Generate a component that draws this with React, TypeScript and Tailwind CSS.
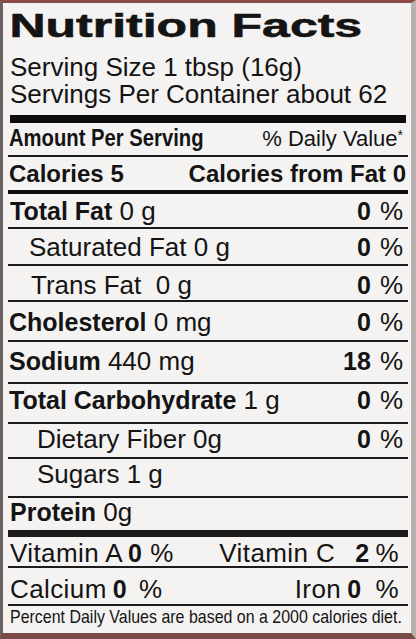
import React from "react";

type Row = {
  name: string;
  amount?: string;
  dv?: string;
  bold: boolean;
  box: string;
  line: string;
};

const rows: Row[] = [
  { name: "Total Fat", amount: "0 g", dv: "0", bold: true, box: "h-[33px] pb-[3px] pl-[2px]", line: "h-[2px]" },
  { name: "Saturated Fat", amount: "0 g", dv: "0", bold: false, box: "h-[35px] pb-[4px] pl-[21px]", line: "h-[2px]" },
  { name: "Trans Fat", amount: "\u00a00 g", dv: "0", bold: false, box: "h-[34px] pb-[2px] pl-[23px]", line: "h-[2px]" },
  { name: "Cholesterol", amount: "0 mg", dv: "0", bold: true, box: "h-[38px] pb-[5px] pl-[1px]", line: "h-[2px]" },
  { name: "Sodium", amount: "440 mg", dv: "18", bold: true, box: "h-[40px] pb-[8px] pl-[1px]", line: "h-[2px]" },
  { name: "Total Carbohydrate", amount: "1 g", dv: "0", bold: true, box: "h-[38px] pb-[9px] pl-[1px]", line: "h-[2px]" },
  { name: "Dietary Fiber", amount: "0g", dv: "0", bold: false, box: "h-[33px] pb-[5px] pl-[29px]", line: "h-[2px]" },
  { name: "Sugars", amount: "1 g", bold: false, box: "h-[37px] pb-[9px] pl-[29px]", line: "h-[2px]" },
  { name: "Protein", amount: "0g", bold: true, box: "h-[32px] pb-[5px] pl-[2px]", line: "h-[7px]" },
];

function NutrientRow({ row }: { row: Row }) {
  return (
    <>
      <div className={`flex items-end justify-between pr-[5px] leading-none text-[26px] ${row.box}`}>
        <span>
          {row.bold ? (
            <>
              <span className="font-bold text-[25px]">{row.name}</span> {row.amount}
            </>
          ) : (
            <>
              {row.name} {row.amount}
            </>
          )}
        </span>
        {row.dv && (
          <span className="flex items-baseline gap-[9px]">
            <span className="font-bold text-[25px]">{row.dv}</span>
            <span>%</span>
          </span>
        )}
      </div>
      <div className={`bg-[#1c1c1c] ${row.line}`} />
    </>
  );
}

export default function App() {
  return (
    <div className="w-[416px] h-[639px] overflow-hidden flex flex-col bg-[#f5f3f2] text-[#141414] font-['Liberation_Sans',Arial,sans-serif] border-t-[3px] border-t-[#8c4b44] border-l-[3px] border-l-[#6a6262] border-r-[5px] border-r-[#b7b1b0] border-b-[6px] border-b-[#7a4a46] pl-[5px] pr-[3px]">
      <div className="h-[112px] pt-[5px] flex flex-col">
        <h1 className="h-[34px] text-[34px] leading-none font-bold whitespace-nowrap origin-left scale-x-[1.47] pl-[1px] [-webkit-text-stroke:0.6px_#141414]">
          Nutrition Facts
        </h1>
        <div className="mt-[12px] text-[26px] leading-[27px] pl-[2px] whitespace-nowrap">
          <div>Serving Size 1 tbsp (16g)</div>
          <div>Servings Per Container about 62</div>
        </div>
      </div>
      <div className="h-[8px] bg-[#0d0d0d] mx-[2px]" />

      <div className="h-[32px] pb-[5px] flex items-end justify-between leading-none pl-[1px] pr-[5px]">
        <span className="font-bold text-[23px] whitespace-nowrap origin-left scale-x-[0.88]">Amount Per Serving</span>
        <span className="text-[22px]">
          % Daily Value<span className="text-[14px] align-top">*</span>
        </span>
      </div>
      <div className="h-[2px] bg-[#1c1c1c]" />

      <div className="h-[33px] pb-[4px] flex items-end justify-between leading-none font-bold text-[24px] pl-[1px] pr-[2px]">
        <span>Calories 5</span>
        <span>Calories from Fat 0</span>
      </div>
      <div className="h-[4px] bg-[#0d0d0d]" />

      {rows.map((row) => (
        <NutrientRow key={row.name} row={row} />
      ))}

      <div className="h-[29px] flex items-end justify-between leading-none text-[26px] tracking-[0.4px] pl-[2px] pr-[9px]">
        <span className="flex items-baseline">
          Vitamin A<span className="font-bold text-[25px] ml-[5px]">0</span>
          <span className="ml-[8px]">%</span>
        </span>
        <span className="flex items-baseline">
          Vitamin C<span className="font-bold text-[25px] ml-[20px]">2</span>
          <span className="ml-[6px]">%</span>
        </span>
      </div>
      <div className="h-[2px] bg-[#1c1c1c]" />

      <div className="h-[36px] pb-[2px] flex items-end justify-between leading-none text-[26px] tracking-[0.4px] pl-[2px] pr-[9px]">
        <span className="flex items-baseline">
          Calcium<span className="font-bold text-[25px] ml-[6px]">0</span>
          <span className="ml-[12px]">%</span>
        </span>
        <span className="flex items-baseline">
          Iron<span className="font-bold text-[25px] ml-[6px]">0</span>
          <span className="ml-[14px]">%</span>
        </span>
      </div>
      <div className="h-[2px] bg-[#1c1c1c]" />

      <div className="h-[27px] pb-[7px] flex items-end leading-none pl-[2px]">
        <span className="text-[19px] whitespace-nowrap origin-left scale-x-[0.84]">
          Percent Daily Values are based on a 2000 calories diet.
        </span>
      </div>
    </div>
  );
}
